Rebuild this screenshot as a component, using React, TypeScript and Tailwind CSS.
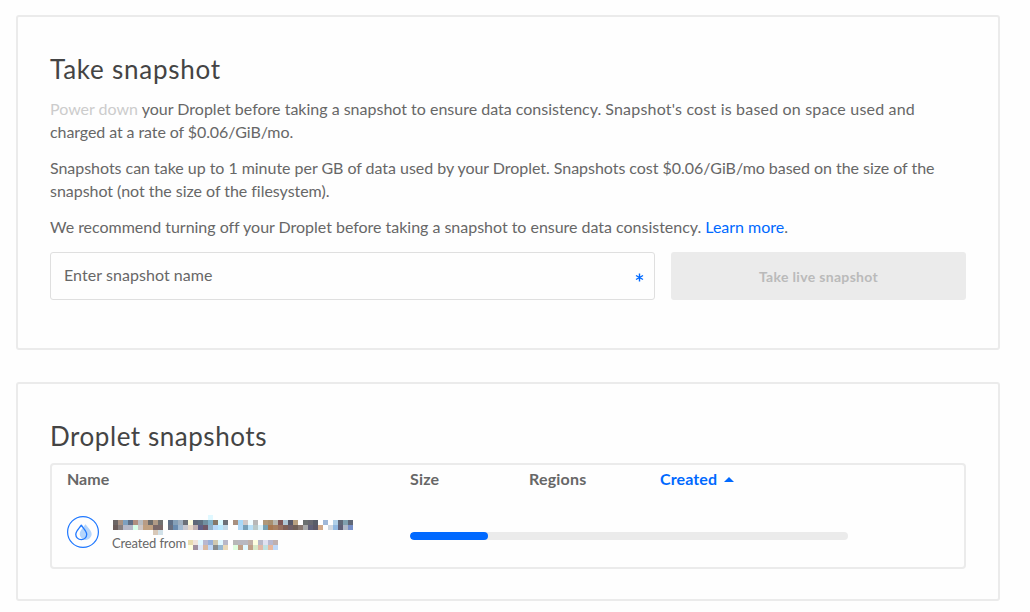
const BLANK = "";

const nameMosaic: string[][] = [
  "|||||||||||||||||||e0f8ff".split("|"),
  "6b6565|a89283|7da0c0|5f6f85|b09080|b8bcc0|b89c85|6b6b6b|b09a85|707070||5f7088|85a0b8|a0b0c0|6b7078|fdfde0|5f6878|5f7080|7090a0|80b0c8|857868|d8f8ff|6b7078||a89080|a8d8f8|d0c8c8|f0fcff|b8b8b8|fefefe|b09878|a89070|b8b8b0|805858|b0c8d8|585868|b8a080|fefefe|6b7070|686870|585c68|fefefe|a0b8d8|fefefe|b0d0e8|606878|80a0b0|606878".split("|"),
  "6a5c5a|888080|b5b8c8|b5b8c8|d8ffe8|cfc6c4|c0a080|c0a080|7a6868|7a6868||6a7080|6a8cb0|a0b8d0|c8c8d0|e8d8c8|c0b0b0|606088|705868|90b0c8|b8d8f8|b8e8ff|c0d8e8||fefefe|b0d8f8|78a0b8|b8e0f8|b8c8c8|d8f0f8|78a0b0|a87850|a88060|987060|806058|706068|706058|887870|a8a8a8|606078|5c5868|d0a888|fefefe|d0d8e0|90b8e0|606078|b0b8c8|7890c8".split("|"),
  "||||||||d8c8b8|d0e0e8".split("|"),
];

const sourceMosaic: string[][] = [
  "e8dcb0|f0e4dc|e0f8ff|b8b8d0|98b0d8|d0c8b0|e0f8ff|b8b8c8||b8b8b8|b8b8c0|b8b8c0|c0b0a8|fefee0|b8b8c8|e0e0f0|b8b8d0|c0b0b0".split("|"),
  "ffffe0|a090a0|e0e8f8|d8b8a0|c0d8f8|888c8c|98b8d0|e8d8b8||e0ffe0|c0a088|e0f8ff|c0a088|d8e8c8|e0b8a8|c0e0e0|e8b8a0|c0d8f8".split("|"),
];

function Mosaic({ rows, width, className }: { rows: string[][]; width: number; className?: string }) {
  return (
    <svg width={width} height={rows.length * 5} shapeRendering="crispEdges" className={className} aria-hidden="true">
      {rows.map((row, y) =>
        row.map((c, x) =>
          c === BLANK ? null : <rect key={`${x}-${y}`} x={x * 5} y={y * 5} width={5} height={5} fill={`#${c}`} />,
        ),
      )}
    </svg>
  );
}

function DropletIcon() {
  return (
    <svg width="32" height="32" viewBox="0 0 32 32" fill="none" className="shrink-0" aria-hidden="true">
      <circle cx="16" cy="16" r="15.4" stroke="#1f78ff" strokeWidth="1.2" />
      <path d="M18.5 8.3C20.5 11 24.7 14.6 24.7 18.3a6 6 0 0 1-6.2 5.6 6 6 0 0 1-5.8-5.6C12.7 14.6 16.6 11 18.5 8.3Z" fill="#b5d5fb" />
      <path d="M14.3 9.2C16 12 19.7 15 19.7 18.5a5.4 5.1 0 0 1-10.9 0C8.8 15 12.6 12 14.3 9.2Z" stroke="#1f78ff" strokeWidth="1.3" strokeLinejoin="round" />
    </svg>
  );
}

function TakeSnapshot() {
  return (
    <section className="h-[335px] rounded-[3px] border-2 border-[#ebebeb] px-8 pt-[34px]">
      <h2 className="text-[26px] leading-9 tracking-[0.76px] text-[#444]">Take snapshot</h2>
      <div className="mt-[10px] text-[16px] leading-[23px] whitespace-nowrap text-[#676767]">
        <p>
          <span className="block">
            <span className="text-[#cccccc]">Power down</span> your Droplet before taking a snapshot to ensure data consistency.{" "}
            <span className="tracking-[0.19px]">Snapshot's cost is based on space used and</span>
          </span>
          <span className="block tracking-[-0.09px]">charged at a rate of $0.06/GiB/mo.</span>
        </p>
        <p className="mt-[13px]">
          <span className="block tracking-[-0.035px]">Snapshots can take up to 1 minute per GB of data used by your Droplet. Snapshots cost $0.06/GiB/mo based on the size of the</span>
          <span className="block tracking-[-0.035px]">snapshot (not the size of the filesystem).</span>
        </p>
        <p className="mt-[13px] tracking-[-0.02px]">
          We recommend turning off your Droplet before taking a snapshot to ensure data consistency. <a className="text-[#0069ff]">Learn more</a>.
        </p>
      </div>
      <div className="mt-[14px] flex gap-4">
        <div className="flex h-12 w-[605px] items-center justify-between rounded-[3px] border border-[#dfdfdf] pr-[10px] pl-[13px] text-[16px] tracking-[0.06px] text-[#676767]">
          <span className="pb-[2px]">Enter snapshot name</span>
          <svg width="9" height="9" viewBox="0 0 9 9" stroke="#0069ff" strokeWidth="1.4" className="mt-[3px]" aria-hidden="true">
            <path d="M4.5 0.5V8.5M1 2.5L8 6.5M8 2.5L1 6.5" />
          </svg>
        </div>
        <button className="h-12 w-[295px] rounded-[3px] bg-[#ebebeb] text-[14px] font-bold tracking-[0.33px] text-[#bababa]">Take live snapshot</button>
      </div>
    </section>
  );
}

function DropletSnapshots() {
  return (
    <section className="h-[219px] rounded-[3px] border-2 border-[#ebebeb] px-8 pt-[34px]">
      <h2 className="text-[26px] leading-9 tracking-[0.55px] text-[#444]">Droplet snapshots</h2>
      <div className="mt-[9px] h-[106px] rounded-[4px] border-2 border-[#ebebeb]">
        <div className="grid h-[30px] grid-cols-[343px_119px_131px_1fr] items-center pb-[2px] pl-[15px] text-[16px] font-bold text-[#676767]">
          <span>Name</span>
          <span className="tracking-[0.2px]">Size</span>
          <span className="tracking-[0.2px]">Regions</span>
          <span className="flex items-center gap-[7px] tracking-[0.12px] text-[#0069ff]">
            Created
            <svg width="10" height="5" viewBox="0 0 10 5" fill="#0069ff" aria-hidden="true">
              <path d="M5 0L10 5H0Z" />
            </svg>
          </span>
        </div>
        <div className="flex h-[72px] pl-[15px]">
          <div className="flex w-[343px] gap-[13px] pt-[21px]">
            <DropletIcon />
            <div className="-mt-px">
              <Mosaic rows={nameMosaic} width={245} className="ml-px" />
              <div className="flex h-[17px] items-center text-[13px] tracking-[-0.13px] text-[#676767]">
                <span className="w-[76px] whitespace-nowrap">Created from</span>
                <Mosaic rows={sourceMosaic} width={90} className="mt-[3px]" />
              </div>
            </div>
          </div>
          <div className="mt-[37px] h-2 w-[438px] overflow-hidden rounded-full bg-[#ebebeb]">
            <div className="h-full w-[78px] rounded-full bg-[#0069ff]" />
          </div>
        </div>
      </div>
    </section>
  );
}

export default function App() {
  return (
    <main className="flex h-[612px] w-[1030px] flex-col gap-8 bg-[#fefefe] pt-[15px] pr-[30px] pl-4 font-['Lato',sans-serif]">
      <TakeSnapshot />
      <DropletSnapshots />
    </main>
  );
}
